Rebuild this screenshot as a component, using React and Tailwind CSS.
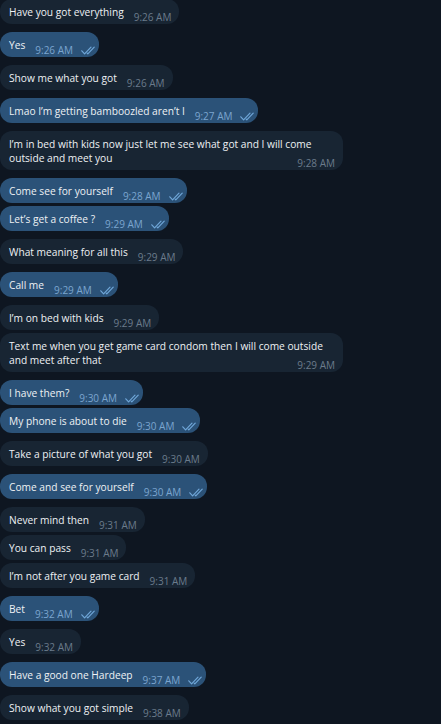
const messages = [
  { out: false, lines: ['Have you got everything'], time: '9:26 AM' },
  { out: true, lines: ['Yes'], time: '9:26 AM' },
  { out: false, lines: ['Show me what you got'], time: '9:26 AM' },
  { out: true, lines: ['Lmao I’m getting bamboozled aren’t I'], time: '9:27 AM' },
  { out: false, lines: ['I’m in bed with kids now just let me see what got and I will come', 'outside and meet you'], time: '9:28 AM' },
  { out: true, lines: ['Come see for yourself'], time: '9:28 AM' },
  { out: true, lines: ['Let’s get a coffee ?'], time: '9:29 AM' },
  { out: false, lines: ['What meaning for all this'], time: '9:29 AM' },
  { out: true, lines: ['Call me'], time: '9:29 AM' },
  { out: false, lines: ['I’m on bed with kids'], time: '9:29 AM' },
  { out: false, lines: ['Text me when you get game card condom then I will come outside', 'and meet after that'], time: '9:29 AM' },
  { out: true, lines: ['I have them?'], time: '9:30 AM' },
  { out: true, lines: ['My phone is about to die'], time: '9:30 AM' },
  { out: false, lines: ['Take a picture of what you got'], time: '9:30 AM' },
  { out: true, lines: ['Come and see for yourself'], time: '9:30 AM' },
  { out: false, lines: ['Never mind then'], time: '9:31 AM' },
  { out: false, lines: ['You can pass'], time: '9:31 AM' },
  { out: false, lines: ['I’m not after you game card'], time: '9:31 AM' },
  { out: true, lines: ['Bet'], time: '9:32 AM' },
  { out: false, lines: ['Yes'], time: '9:32 AM' },
  { out: true, lines: ['Have a good one Hardeep'], time: '9:37 AM' },
  { out: false, lines: ['Show what you got simple'], time: '9:38 AM' },
];

const DoubleCheck = () => (
  <svg width="14" height="9" viewBox="0 0 14 9" fill="none" stroke="#6fa6d8" strokeWidth="1.2" strokeLinecap="round" strokeLinejoin="round">
    <path d="M0.8 4.8 L3.6 7.8 L10 1.2" />
    <path d="M6.2 7.2 L6.8 7.8 L13.2 1.2" />
  </svg>
);

const Meta = ({ out, time }) => (
  <span className="flex shrink-0 items-center gap-[8px] mb-[-3px]">
    <span className={`text-[10px] leading-[11px] whitespace-nowrap ${out ? 'text-[#7ba5cf]' : 'text-[#6b7b8b]'}`}>{time}</span>
    {out && <DoubleCheck />}
  </span>
);

const Bubble = ({ out, lines, time }) => {
  const first = lines.slice(0, -1);
  const last = lines[lines.length - 1];
  const multi = lines.length > 1;
  const lead = multi ? 'leading-[14.5px]' : 'leading-[15px]';

  return (
    <div
      className={`w-fit rounded-[12px] pl-[9px] pt-[5.5px] pb-[4.5px] ${out ? 'bg-[#2b5278] pr-[4px]' : 'bg-[#182533] pr-[8px]'} ${multi ? 'min-w-[343px]' : ''}`}
    >
      {first.map((l) => (
        <div key={l} className={`text-[10.2px] ${lead} text-[#eef1f4] whitespace-nowrap`}>{l}</div>
      ))}
      <div className="flex items-end justify-between gap-[10px]">
        <span className={`text-[10.2px] ${lead} text-[#eef1f4] whitespace-nowrap`}>{last}</span>
        <Meta out={out} time={time} />
      </div>
    </div>
  );
};

export default function App() {
  return (
    <div className="min-h-[724px] w-[441px] overflow-hidden bg-[#0e1621]" style={{ fontFamily: '"Open Sans", "Noto Sans", sans-serif' }}>
      <div className="flex flex-col mt-[-1px]">
        {messages.map((m, i) => {
          const same = i > 0 && messages[i - 1].out === m.out;
          return (
            <div key={i} className={i === 0 ? '' : same ? 'mt-[3px]' : 'mt-[8px]'}>
              <Bubble {...m} />
            </div>
          );
        })}
      </div>
    </div>
  );
}
